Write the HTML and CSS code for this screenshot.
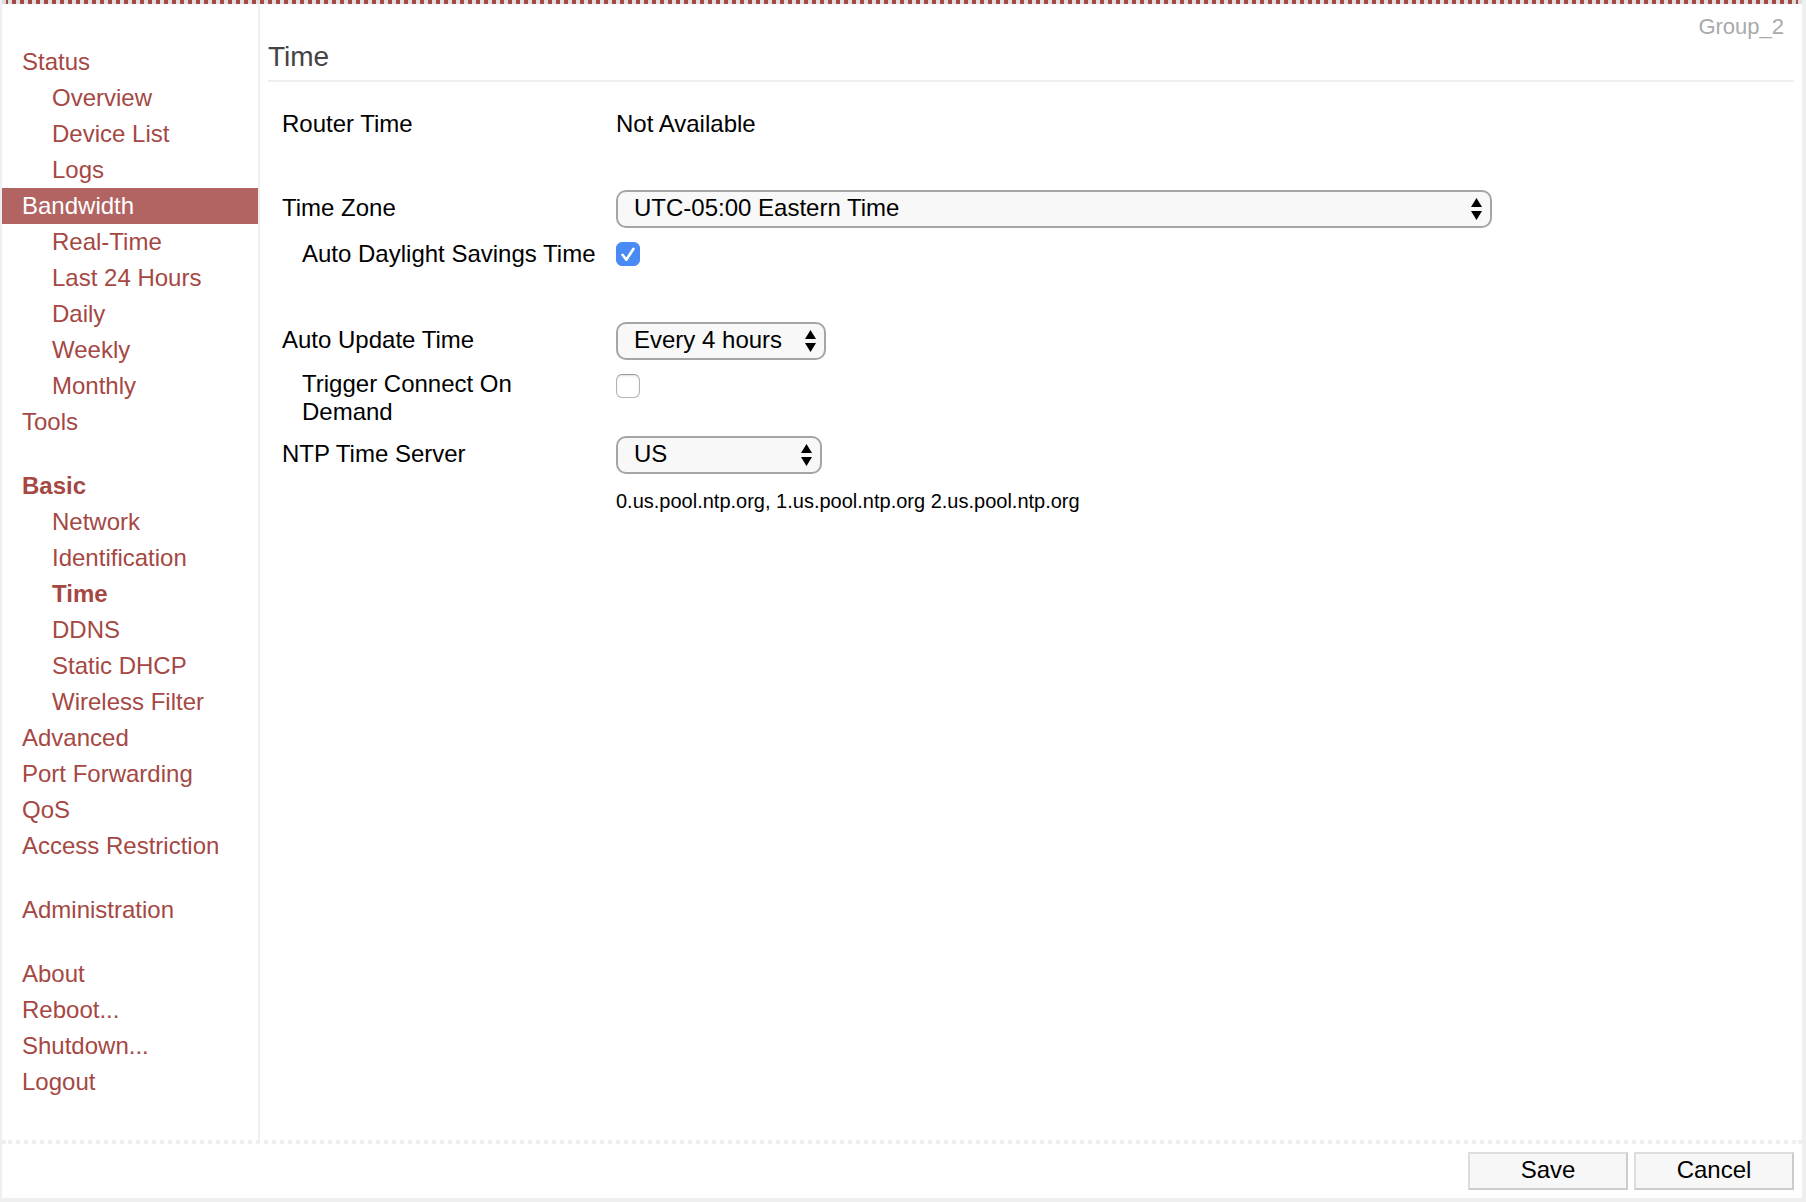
FILE: index.html
```html
<!DOCTYPE html>
<html lang="en">
<head>
<meta charset="utf-8">
<title>Time</title>
<link rel="stylesheet" href="styles.css">
</head>
<body>
<div class="page">
  <div class="topbar"></div>
  <div class="main">
    <nav class="menu">
      <a href="#">Status</a>
      <a href="#" class="sub">Overview</a>
      <a href="#" class="sub">Device List</a>
      <a href="#" class="sub">Logs</a>
      <a href="#" class="hover">Bandwidth</a>
      <a href="#" class="sub">Real-Time</a>
      <a href="#" class="sub">Last 24 Hours</a>
      <a href="#" class="sub">Daily</a>
      <a href="#" class="sub">Weekly</a>
      <a href="#" class="sub">Monthly</a>
      <a href="#">Tools</a>
      <a href="#" class="group active">Basic</a>
      <a href="#" class="sub">Network</a>
      <a href="#" class="sub">Identification</a>
      <a href="#" class="sub active">Time</a>
      <a href="#" class="sub">DDNS</a>
      <a href="#" class="sub">Static DHCP</a>
      <a href="#" class="sub">Wireless Filter</a>
      <a href="#">Advanced</a>
      <a href="#">Port Forwarding</a>
      <a href="#">QoS</a>
      <a href="#">Access Restriction</a>
      <a href="#" class="group">Administration</a>
      <a href="#" class="group">About</a>
      <a href="#">Reboot...</a>
      <a href="#">Shutdown...</a>
      <a href="#">Logout</a>
    </nav>
    <main class="content">
      <div class="ident">Group_2</div>
      <h1 class="title">Time</h1>
      <form class="fields" id="time-form">
        <div class="row">
          <span class="label">Router Time</span>
          <span>Not Available</span>
        </div>
        <div class="row pick-row zone-row">
          <label class="label" for="zone">Time Zone</label>
          <div class="select zone">
            <select id="zone"><option>UTC-05:00 Eastern Time</option></select>
            <svg class="arrows" viewBox="0 0 11 22" aria-hidden="true"><path d="M5.500 0L11 9H0ZM0 13H11L5.500 22Z"/></svg>
          </div>
        </div>
        <div class="row tick-row">
          <label class="label indent" for="dst">Auto Daylight Savings Time</label>
          <span class="tick">
            <input type="checkbox" id="dst" checked>
            <svg class="mark" viewBox="0 0 24 24" aria-hidden="true"><path d="M6.500 12.800L10.300 17.800L17.500 6.800"/></svg>
          </span>
        </div>
        <div class="row pick-row update-row">
          <label class="label" for="update">Auto Update Time</label>
          <div class="select update">
            <select id="update"><option>Every 4 hours</option></select>
            <svg class="arrows" viewBox="0 0 11 22" aria-hidden="true"><path d="M5.500 0L11 9H0ZM0 13H11L5.500 22Z"/></svg>
          </div>
        </div>
        <div class="row wrap-row">
          <label class="label indent" for="trigger">Trigger Connect On Demand</label>
          <span class="tick"><input type="checkbox" id="trigger"></span>
        </div>
        <div class="row pick-row">
          <label class="label" for="ntp">NTP Time Server</label>
          <div class="select ntp">
            <select id="ntp"><option>US</option></select>
            <svg class="arrows" viewBox="0 0 11 22" aria-hidden="true"><path d="M5.500 0L11 9H0ZM0 13H11L5.500 22Z"/></svg>
          </div>
        </div>
        <div class="row">
          <span class="note">0.us.pool.ntp.org, 1.us.pool.ntp.org 2.us.pool.ntp.org</span>
        </div>
      </form>
    </main>
  </div>
  <footer class="footer">
    <button type="submit" form="time-form">Save</button>
    <button type="button">Cancel</button>
  </footer>
</div>
</body>
</html>
```
FILE: styles.css
```css
* {
  box-sizing: border-box;
}

body {
  margin: 0;
  background: #fff;
  color: #000;
  font: 24px/28px "Liberation Sans", Arial, Helvetica, sans-serif;
}

.page {
  display: flex;
  flex-direction: column;
  min-height: 100vh;
  border: solid #efefef;
  border-width: 0 4px 4px 2px;
}

.topbar {
  height: 4px;
  background: repeating-linear-gradient(90deg, #a54844 0 2px, #ddd 2px 6px, #a54844 6px 8px);
  border: solid #ddd;
  border-width: 0 4px;
}

.main {
  display: flex;
  flex: 1;
}

.menu {
  flex: 0 0 258px;
  padding: 40px 0;
  border-right: 2px solid #efefef;
}

.menu a {
  display: block;
  padding: 0 20px;
  line-height: 36px;
  color: #a54844;
  text-decoration: none;
}

.menu .sub {
  padding-left: 50px;
}

.menu .group {
  margin-top: 28px;
}

.menu .active {
  font-weight: bold;
}

.menu .hover {
  background: #b16462;
  color: #fff;
}

.content {
  flex: 1;
  padding: 10px 8px;
}

.ident {
  padding-right: 10px;
  font-size: 22px;
  line-height: 26px;
  text-align: right;
  color: #aaa;
}

.title {
  margin: 0;
  padding-bottom: 6px;
  border-bottom: 2px solid #efefef;
  font-size: 28px;
  font-weight: normal;
  line-height: 34px;
  color: #444;
}

.fields {
  display: flex;
  flex-direction: column;
  gap: 10px;
  padding: 24px 14px 0;
}

.row {
  display: grid;
  grid-template-columns: 318px 1fr;
  column-gap: 16px;
  align-items: center;
  min-height: 36px;
}

.pick-row .label {
  padding-bottom: 2px;
}

.zone-row {
  margin-top: 38px;
}

.tick-row {
  min-height: 32px;
}

.update-row {
  margin-top: 42px;
}

.wrap-row {
  align-items: start;
}

.wrap-row .tick {
  margin-top: 4px;
}

.indent {
  padding-left: 20px;
}

.select {
  position: relative;
  max-width: 100%;
}

.zone {
  width: 876px;
}

.update {
  width: 210px;
}

.ntp {
  width: 206px;
}

.select select {
  display: block;
  width: 100%;
  height: 38px;
  padding: 0 30px 2px 16px;
  border: 2px solid #a5a5a5;
  border-radius: 10px;
  background: #f8f8f8;
  color: #000;
  font: inherit;
  appearance: none;
}

.arrows {
  position: absolute;
  top: 8px;
  right: 10px;
  width: 11px;
  height: 22px;
  pointer-events: none;
}

.tick {
  position: relative;
  width: 24px;
  height: 24px;
}

.tick input {
  display: block;
  width: 24px;
  height: 24px;
  margin: 0;
  border: 1px solid #b4b4b4;
  border-top-color: #999;
  border-radius: 6px;
  background: #fff;
  box-shadow: inset 0 1px 2px #ddd;
  appearance: none;
}

.tick input:checked {
  border-color: #4a8af4;
  background: #4a8af4;
  box-shadow: none;
}

.mark {
  position: absolute;
  inset: 0;
  fill: none;
  stroke: #fff;
  stroke-width: 2.600;
  stroke-linecap: round;
  stroke-linejoin: round;
  pointer-events: none;
}

.note {
  grid-column: 2;
  padding-bottom: 2px;
  font-size: 20px;
  line-height: 24px;
}

.footer {
  display: flex;
  justify-content: flex-end;
  gap: 6px;
  padding: 12px 8px 8px;
  background:
    linear-gradient(#efefef, #efefef) left top / 4px 4px no-repeat,
    linear-gradient(#efefef, #efefef) right top / 4px 4px no-repeat,
    linear-gradient(90deg, #efefef 0 2px, #fff 2px 6px, #efefef 6px 8px) left top / 8px 4px repeat-x;
}

.footer button {
  width: 160px;
  height: 38px;
  padding: 0 0 2px;
  border: 2px solid;
  border-color: #ddd #ccc #ccc #ddd;
  background: #f7f7f7;
  color: #000;
  font: inherit;
}
```
